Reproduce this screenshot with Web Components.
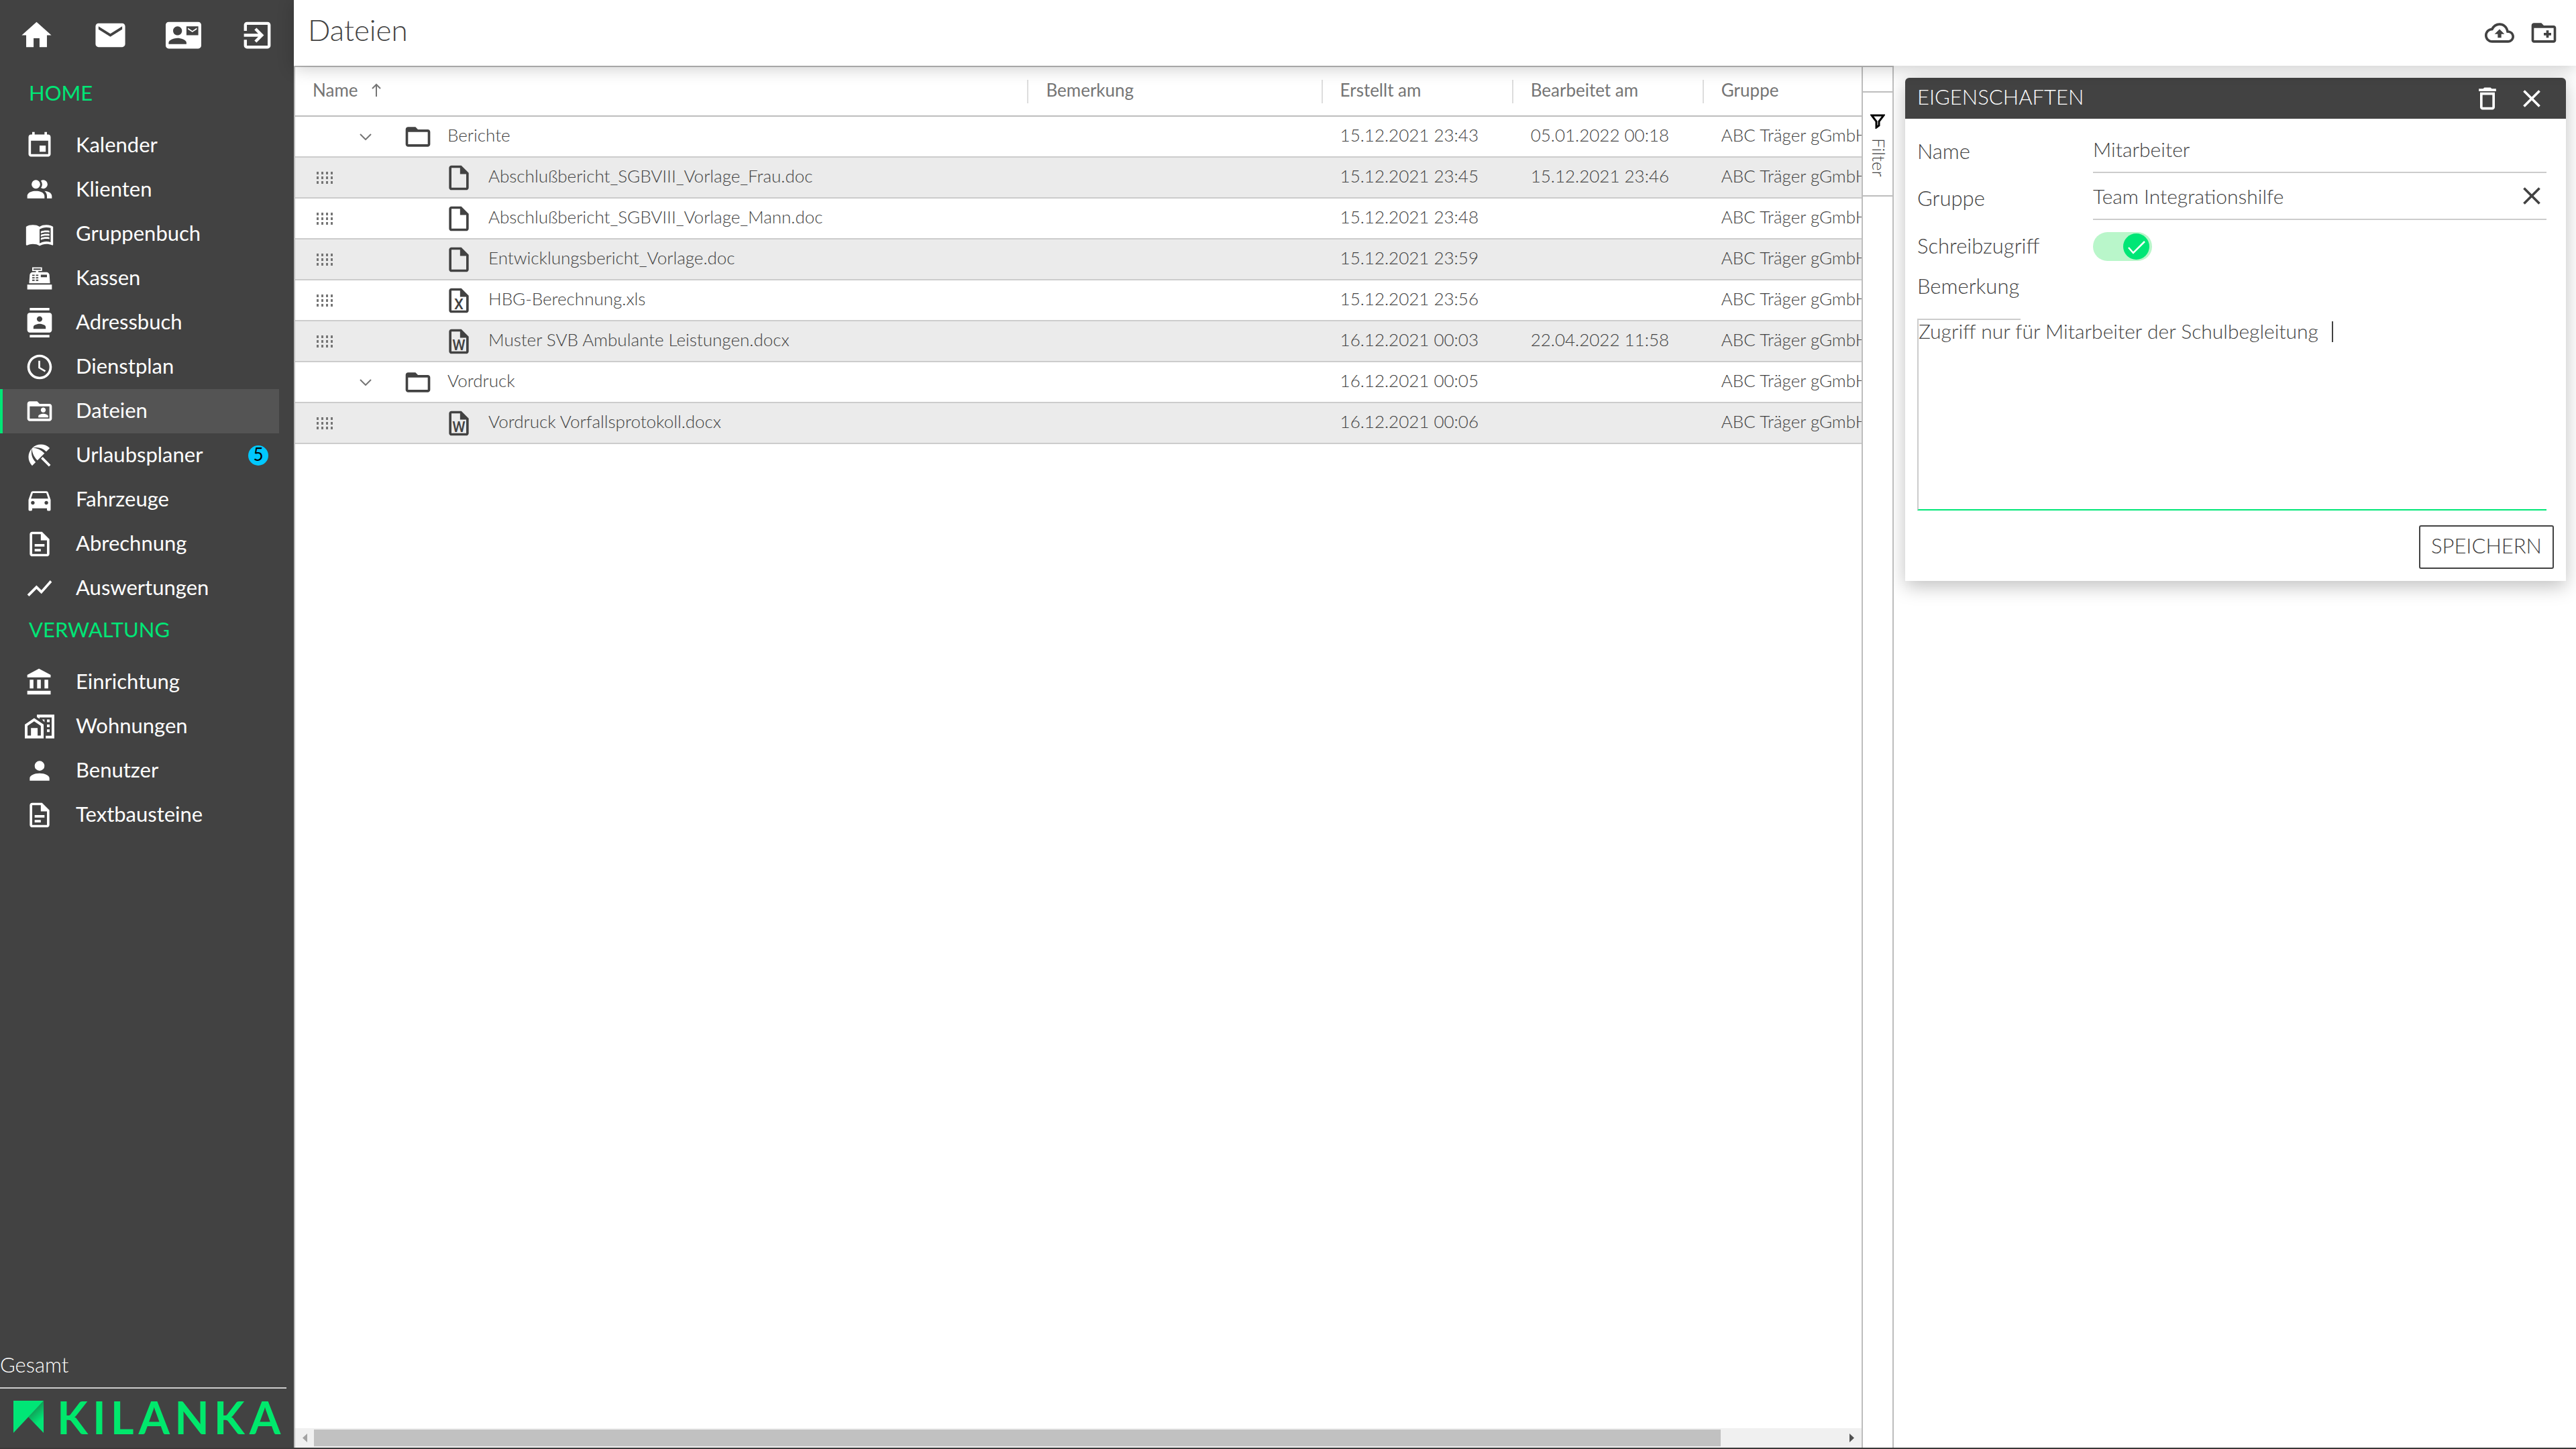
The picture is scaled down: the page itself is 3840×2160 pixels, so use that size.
<!DOCTYPE html>
<html lang="de">
<head>
<meta charset="utf-8">
<title>Dateien</title>
<style>
  body {
    margin: 0;
    background: #fff;
    color: #424242;
    font-family: Lato, "Liberation Sans", sans-serif;
    font-size: 31px;
    font-weight: 300;
    line-height: 36px;
  }
</style>
</head>
<body>
<kila-app></kila-app>

<script>
const ICONS = {
  home: 'M10 20v-6h4v6h5v-8h3L12 3 2 12h3v8z',
  mail: 'M20 4H4c-1.1 0-1.99.9-1.99 2L2 18c0 1.1.9 2 2 2h16c1.1 0 2-.9 2-2V6c0-1.1-.9-2-2-2zm0 4l-8 5-8-5V6l8 5 8-5v2z',
  contactMail: 'M21 8V7l-3 2-3-2v1l3 2 3-2m1-5H2C.9 3 0 3.9 0 5v14c0 1.1.9 2 2 2h20c1.1 0 1.99-.9 1.99-2L24 5c0-1.1-.9-2-2-2zM8 6c1.66 0 3 1.34 3 3s-1.34 3-3 3-3-1.34-3-3 1.34-3 3-3zm6 12H2v-1c0-2 4-3.1 6-3.1s6 1.1 6 3.1v1zm8-6h-8V6h8v6z',
  exit: 'M10.09 15.59L11.5 17l5-5-5-5-1.41 1.41L12.67 11H3v2h9.67l-2.58 2.59zM19 3H5a2 2 0 0 0-2 2v4h2V5h14v14H5v-4H3v4a2 2 0 0 0 2 2h14c1.1 0 2-.9 2-2V5c0-1.1-.9-2-2-2z',
  event: 'M17 12h-5v5h5v-5zM16 1v2H8V1H6v2H5c-1.11 0-1.99.9-1.99 2L3 19c0 1.1.89 2 2 2h14c1.1 0 2-.9 2-2V5c0-1.1-.9-2-2-2h-1V1h-2zm3 18H5V8h14v11z',
  people: 'M16 17v2H2v-2s0-4 7-4 7 4 7 4m-3.5-9.5A3.5 3.5 0 1 0 9 11a3.5 3.5 0 0 0 3.5-3.5m3.44 5.5A5.32 5.32 0 0 1 18 17v2h4v-2s0-3.63-6.06-4M15 4a3.39 3.39 0 0 0-1.93.59 5 5 0 0 1 0 5.82A3.39 3.39 0 0 0 15 11a3.5 3.5 0 0 0 0-7z',
  book: 'M21 5c-1.11-.35-2.33-.5-3.5-.5-1.95 0-4.05.4-5.5 1.5-1.45-1.1-3.55-1.5-5.5-1.5S2.45 4.9 1 6v14.65c0 .25.25.5.5.5.1 0 .15-.05.25-.05C3.1 20.45 5.05 20 6.5 20c1.95 0 4.05.4 5.5 1.5 1.35-.85 3.8-1.5 5.5-1.5 1.65 0 3.35.3 4.75 1.05.1.05.15.05.25.05.25 0 .5-.25.5-.5V6c-.6-.45-1.25-.75-2-1zm0 13.5c-1.1-.35-2.3-.5-3.5-.5-1.7 0-4.15.65-5.5 1.5V8c1.35-.85 3.8-1.5 5.5-1.5 1.2 0 2.4.15 3.5.5v11.5zM17.5 10.5c.88 0 1.73.09 2.5.26V9.24C19.21 9.09 18.36 9 17.5 9c-1.7 0-3.24.29-4.5.83v1.66c1.13-.64 2.7-.99 4.5-.99zM13 12.49v1.66c1.13-.64 2.7-.99 4.5-.99.88 0 1.73.09 2.5.26V11.9c-.79-.15-1.64-.24-2.5-.24-1.7 0-3.24.3-4.5.83zM17.5 14.33c-1.7 0-3.24.29-4.5.83v1.66c1.13-.64 2.7-.99 4.5-.99.88 0 1.73.09 2.5.26v-1.52c-.79-.16-1.64-.24-2.5-.24z',
  register: 'M2 17h20v4H2v-4M6.25 7H9V6H6V3h8v3h-3v1h6.8c1 0 2 1 2.2 2l.5 7h-17l.5-7c.2-1 1.2-2 2.25-2M13 9v2h5V9h-5M6 9v1h2V9H6m3 0v1h2V9H9m-3 2v1h2v-1H6m3 0v1h2v-1H9m-3 2v1h2v-1H6m3 0v1h2v-1H9M7 4v1h6V4H7z',
  contacts: 'M20 0H4v2h16V0zM4 24h16v-2H4v2zM20 4H4c-1.1 0-2 .9-2 2v12c0 1.1.9 2 2 2h16c1.1 0 2-.9 2-2V6c0-1.1-.9-2-2-2zm-8 2.75c1.24 0 2.25 1.01 2.25 2.25s-1.01 2.25-2.25 2.25S9.75 10.24 9.75 9 10.76 6.75 12 6.75zM17 17H7v-1.5c0-1.67 3.33-2.5 5-2.5s5 .83 5 2.5V17z',
  clock: 'M11.99 2C6.47 2 2 6.48 2 12s4.47 10 9.99 10C17.52 22 22 17.52 22 12S17.52 2 11.99 2zM12 20c-4.42 0-8-3.58-8-8s3.58-8 8-8 8 3.58 8 8-3.58 8-8 8zm.5-13H11v6l5.25 3.15.75-1.23-4.5-2.67z',
  folderShared: 'M20 6h-8l-2-2H4c-1.1 0-1.99.9-1.99 2L2 18c0 1.1.9 2 2 2h16c1.1 0 2-.9 2-2V8c0-1.1-.9-2-2-2zm0 12H4V8h16v10zM15 13c1.1 0 2-.9 2-2s-.9-2-2-2-2 .9-2 2 .9 2 2 2zm-4 4h8v-1c0-1.33-2.67-2-4-2s-4 .67-4 2v1z',
  beach: 'M13.127 14.56l1.43-1.43 6.44 6.443L19.57 21zm4.293-5.73l2.86-2.86c-3.95-3.95-10.35-3.96-14.3-.02 3.93-1.3 8.31-.25 11.44 2.88zM5.95 5.98c-3.94 3.95-3.93 10.35.02 14.3l2.86-2.86C5.7 14.29 4.65 9.91 5.95 5.98zm.02-.02l-.01.01c-.38 3.01 1.17 6.88 4.3 10.02l5.73-5.73c-3.13-3.13-7.01-4.69-10.02-4.3z',
  car: 'M18.92 6.01C18.72 5.42 18.16 5 17.5 5h-11c-.66 0-1.21.42-1.42 1.01L3 12v8c0 .55.45 1 1 1h1c.55 0 1-.45 1-1v-1h12v1c0 .55.45 1 1 1h1c.55 0 1-.45 1-1v-8l-2.08-5.99zM6.5 16c-.83 0-1.5-.67-1.5-1.5S5.67 13 6.5 13s1.5.67 1.5 1.5S7.33 16 6.5 16zm11 0c-.83 0-1.5-.67-1.5-1.5s.67-1.5 1.5-1.5 1.5.67 1.5 1.5-.67 1.5-1.5 1.5zM5 11l1.5-4.5h11L19 11H5z',
  document: 'M6 2c-1.1 0-2 .9-2 2v16c0 1.1.9 2 2 2h12c1.1 0 2-.9 2-2V8l-6-6H6zm0 2h7v5h5v11H6V4zM8 12h8v2H8zM8 16h5v2H8z',
  chart: 'M3.5 18.49l6-6.01 4 4L22 6.92l-1.41-1.41-7.09 7.97-4-4L2 16.99z',
  bank: 'M4 10v7h3v-7H4zm6 0v7h3v-7h-3zM2 22h19v-3H2v3zm14-12v7h3v-7h-3zm-4.5-9L2 6v2h19V6l-9.5-5z',
  homeWork: 'M0 10.3l7.6-5.1 7.7 5.1v11.4H0zM2.2 11.5v7.9H5v-6.2h5.4v6.2H13v-7.9L7.6 7.8zM9.8 2.3H24v19.4h-7v-2.2h4.8V4.6H12v1.1L9.8 4.3zM18 6.3h2.2v2.2H18zM18 10.3h2.2v2.2H18zM18 14.3h2.2v2.2H18zM14 6.3h2v2.2z',
  person: 'M12 4a4 4 0 1 1 0 8 4 4 0 0 1 0-8m0 10c4.42 0 8 1.79 8 4v2H4v-2c0-2.21 3.58-4 8-4z',
  cloudUpload: 'M19.35 10.04C18.67 6.59 15.64 4 12 4 9.11 4 6.6 5.64 5.35 8.04 2.34 8.36 0 10.91 0 14c0 3.31 2.69 6 6 6h13c2.76 0 5-2.24 5-5 0-2.64-2.05-4.78-4.65-4.96zM19 18H6c-2.21 0-4-1.79-4-4 0-2.05 1.53-3.76 3.56-3.97l1.07-.11.5-.95C8.08 7.14 9.94 6 12 6c2.62 0 4.88 1.86 5.39 4.43l.3 1.5 1.53.11c1.56.1 2.78 1.41 2.78 2.96 0 1.65-1.35 3-3 3zM8 13h2.55v3h2.9v-3H16l-4-4z',
  folderAdd: 'M20 6h-8l-2-2H4c-1.11 0-1.99.89-1.99 2L2 18c0 1.11.89 2 2 2h16c1.11 0 2-.89 2-2V8c0-1.11-.89-2-2-2zm0 12H4V8h16v10zm-8-4h2v2h2v-2h2v-2h-2v-2h-2v2h-2v2z',
  folder: 'M20 6h-8l-2-2H4c-1.1 0-1.99.9-1.99 2L2 18c0 1.1.9 2 2 2h16c1.1 0 2-.9 2-2V8c0-1.1-.9-2-2-2zm0 12H4V8h16v10z',
  file: 'M6 2c-1.1 0-2 .9-2 2v16c0 1.1.9 2 2 2h12c1.1 0 2-.9 2-2V8l-6-6H6zm0 2h7v5h5v11H6V4z',
  trash: 'M6 19c0 1.1.9 2 2 2h8c1.1 0 2-.9 2-2V7H6v12zM8 9h8v10H8V9zm7.5-5l-1-1h-5l-1 1H5v2h14V4h-3.5z',
  close: 'M19 6.41L17.59 5 12 10.59 6.41 5 5 6.41 10.59 12 5 17.59 6.41 19 12 13.41 17.59 19 19 17.59 13.41 12z'
};

// <kila-icon name="home"> : 24er Raster, letter = Buchstabe im Dateisymbol
class KilaIcon extends HTMLElement {
  constructor() {
    super();
    this.attachShadow({ mode: 'open' });
  }

  connectedCallback() {
    const letter = this.getAttribute('letter');
    this.shadowRoot.innerHTML = `
      <style>
        :host {
          display: block;
          flex: none;
          width: var(--icon-size, 44px);
          height: var(--icon-size, 44px);
        }
        svg { display: block; width: 100%; height: 100%; fill: currentColor; overflow: visible; }
        text { font: 500 12px Roboto, sans-serif; text-anchor: middle; }
      </style>
      <svg viewBox="0 0 24 24" aria-hidden="true">
        <path fill-rule="evenodd" d="${ICONS[this.getAttribute('name')]}"/>
        ${letter ? `<text x="12" y="19">${letter}</text>` : ''}
      </svg>
    `;
  }
}
customElements.define('kila-icon', KilaIcon);

class NavItem extends HTMLElement {
  constructor() {
    super();
    this.attachShadow({ mode: 'open' });
  }

  connectedCallback() {
    const badge = this.getAttribute('badge');
    this.shadowRoot.innerHTML = `
      <style>
        :host { display: block; margin-right: 22px; }
        a {
          display: flex;
          align-items: center;
          height: 66px;
          box-sizing: border-box;
          padding: 0 16px 0 33px;
          border-left: 4px solid transparent;
          color: #fff;
          font-weight: 400;
          text-decoration: none;
        }
        :host([active]) a { background: #545454; border-left-color: #00e676; }
        .label { flex: 1; padding: 0 0 4px 32px; }
        .badge {
          width: 30px;
          height: 30px;
          border-radius: 50%;
          background: #00c8ff;
          color: #000;
          font-size: 26px;
          line-height: 26px;
          text-align: center;
        }
      </style>
      <a href="#">
        <kila-icon name="${this.getAttribute('icon')}"></kila-icon>
        <span class="label"><slot></slot></span>
        ${badge ? `<span class="badge">${badge}</span>` : ''}
      </a>
    `;
  }
}
customElements.define('nav-item', NavItem);

class NavSection extends HTMLElement {
  constructor() {
    super();
    this.attachShadow({ mode: 'open' });
  }

  connectedCallback() {
    this.shadowRoot.innerHTML = `
      <style>
        :host { display: block; }
        h2 {
          margin: 0;
          padding: 10px 0 28px 43px;
          color: #00e676;
          font-size: 31px;
          font-weight: 400;
          line-height: 36px;
        }
      </style>
      <h2>${this.getAttribute('heading')}</h2>
      <slot></slot>
    `;
  }
}
customElements.define('nav-section', NavSection);

class KilaLogo extends HTMLElement {
  constructor() {
    super();
    this.attachShadow({ mode: 'open' });
    this.shadowRoot.innerHTML = `
      <style>
        :host {
          display: flex;
          align-items: center;
          gap: 20px;
          height: 48px;
          padding: 18px 0 22px 20px;
          color: #00e86c;
          font-size: 67px;
          font-weight: 700;
          line-height: 48px;
        }
        svg { flex: none; width: 45px; height: 48px; }
        span { letter-spacing: 7px; }
      </style>
      <svg viewBox="0 0 45 48" aria-hidden="true">
        <defs>
          <linearGradient id="fold" gradientUnits="userSpaceOnUse" x1="30" y1="15" x2="42" y2="28">
            <stop offset="0" stop-color="#12a058"/>
            <stop offset="1" stop-color="#00e676"/>
          </linearGradient>
        </defs>
        <path d="M45 0v48L22 24z" fill="url(#fold)"/>
        <path d="M0 0h45L0 48z" fill="#00e676"/>
      </svg>
      <span>KILANKA</span>
    `;
  }
}
customElements.define('kila-logo', KilaLogo);

class KilaSidebar extends HTMLElement {
  constructor() {
    super();
    this.attachShadow({ mode: 'open' });
    this.shadowRoot.innerHTML = `
      <style>
        :host {
          display: flex;
          flex-direction: column;
          flex: none;
          width: 438px;
          background: #424242;
          color: #fff;
        }
        .shortcuts {
          display: grid;
          grid-template-columns: repeat(4, 1fr);
          height: 105px;
          margin-bottom: 5px;
          --icon-size: 53px;
        }
        button {
          display: grid;
          place-items: center;
          padding: 0;
          border: 0;
          background: none;
          color: inherit;
        }
        nav { flex: 1; }
        select {
          appearance: none;
          display: block;
          width: 427px;
          height: 60px;
          padding: 0 0 10px;
          border: 0;
          border-bottom: 2px solid #ccc;
          border-radius: 0;
          background: none;
          color: inherit;
          font: inherit;
        }
      </style>
      <div class="shortcuts">
        <button aria-label="Startseite"><kila-icon name="home"></kila-icon></button>
        <button aria-label="Nachrichten"><kila-icon name="mail"></kila-icon></button>
        <button aria-label="Kontakt"><kila-icon name="contactMail"></kila-icon></button>
        <button aria-label="Abmelden"><kila-icon name="exit"></kila-icon></button>
      </div>
      <nav>
        <nav-section heading="HOME">
          <nav-item icon="event">Kalender</nav-item>
          <nav-item icon="people">Klienten</nav-item>
          <nav-item icon="book">Gruppenbuch</nav-item>
          <nav-item icon="register">Kassen</nav-item>
          <nav-item icon="contacts">Adressbuch</nav-item>
          <nav-item icon="clock">Dienstplan</nav-item>
          <nav-item icon="folderShared" active>Dateien</nav-item>
          <nav-item icon="beach" badge="5">Urlaubsplaner</nav-item>
          <nav-item icon="car">Fahrzeuge</nav-item>
          <nav-item icon="document">Abrechnung</nav-item>
          <nav-item icon="chart">Auswertungen</nav-item>
        </nav-section>
        <nav-section heading="VERWALTUNG">
          <nav-item icon="bank">Einrichtung</nav-item>
          <nav-item icon="homeWork">Wohnungen</nav-item>
          <nav-item icon="person">Benutzer</nav-item>
          <nav-item icon="document">Textbausteine</nav-item>
        </nav-section>
      </nav>
      <select aria-label="Bereich"><option>Gesamt</option></select>
      <kila-logo></kila-logo>
    `;
  }
}
customElements.define('kila-sidebar', KilaSidebar);

class PageHeader extends HTMLElement {
  constructor() {
    super();
    this.attachShadow({ mode: 'open' });
    this.shadowRoot.innerHTML = `
      <style>
        :host {
          display: flex;
          align-items: center;
          position: relative;
          z-index: 1;
          height: 98px;
          box-sizing: border-box;
          padding: 0 26px 0 21px;
          background: #fff;
          box-shadow: 0 4px 24px rgba(0, 0, 0, 0.2);
        }
        h1 {
          flex: 1;
          margin: 0;
          padding-bottom: 10px;
          font-size: 44px;
          font-weight: 300;
          line-height: 50px;
        }
        .actions { display: flex; gap: 22px; }
        button {
          padding: 0;
          border: 0;
          background: none;
          color: inherit;
        }
      </style>
      <h1><slot></slot></h1>
      <div class="actions">
        <button aria-label="Hochladen"><kila-icon name="cloudUpload"></kila-icon></button>
        <button aria-label="Neuer Ordner"><kila-icon name="folderAdd"></kila-icon></button>
      </div>
    `;
  }
}
customElements.define('page-header', PageHeader);

const FILES = [
  { folder: true, name: 'Berichte', created: '15.12.2021 23:43', edited: '05.01.2022 00:18' },
  { name: 'Abschlußbericht_SGBVIII_Vorlage_Frau.doc', created: '15.12.2021 23:45', edited: '15.12.2021 23:46' },
  { name: 'Abschlußbericht_SGBVIII_Vorlage_Mann.doc', created: '15.12.2021 23:48', edited: '' },
  { name: 'Entwicklungsbericht_Vorlage.doc', created: '15.12.2021 23:59', edited: '' },
  { name: 'HBG-Berechnung.xls', letter: 'X', created: '15.12.2021 23:56', edited: '' },
  { name: 'Muster SVB Ambulante Leistungen.docx', letter: 'W', created: '16.12.2021 00:03', edited: '22.04.2022 11:58' },
  { folder: true, name: 'Vordruck', created: '16.12.2021 00:05', edited: '' },
  { name: 'Vordruck Vorfallsprotokoll.docx', letter: 'W', created: '16.12.2021 00:06', edited: '' }
];

class FileGrid extends HTMLElement {
  constructor() {
    super();
    this.attachShadow({ mode: 'open' });
  }

  connectedCallback() {
    this.render();
  }

  renderRow(file) {
    const lead = file.folder
      ? '<svg class="chevron" viewBox="0 0 18 10"><path d="M1 1l8 8 8-8"/></svg>'
      : '<span class="grip"></span>';
    return `
      <tr>
        <td>
          <div class="name">
            <span class="lead ${file.folder ? 'folder' : ''}">${lead}</span>
            <kila-icon name="${file.folder ? 'folder' : 'file'}" ${file.letter ? `letter="${file.letter}"` : ''}></kila-icon>
            <span class="text">${file.name}</span>
          </div>
        </td>
        <td></td>
        <td>${file.created}</td>
        <td>${file.edited}</td>
        <td>ABC Träger gGmbH</td>
      </tr>
    `;
  }

  render() {
    this.shadowRoot.innerHTML = `
      <style>
        :host {
          display: flex;
          flex: 1;
          min-width: 0;
          border: 2px solid #bdbdbd;
          border-bottom: 0;
        }
        .grid {
          display: flex;
          flex-direction: column;
          flex: 1;
          min-width: 0;
        }
        .viewport { flex: 1; overflow: hidden; }
        table {
          width: 2536px;
          table-layout: fixed;
          border-collapse: separate;
          border-spacing: 0;
          font-size: 26px;
          line-height: 32px;
        }
        .c-name { width: 1091px; }
        .c-text { width: 438px; }
        .c-date { width: 284px; }
        th {
          height: 72px;
          padding: 0;
          border-bottom: 2px solid #bdbdbd;
          color: #757575;
          font-weight: 400;
          text-align: left;
        }
        th div {
          display: flex;
          align-items: center;
          height: 35px;
          box-sizing: border-box;
          padding: 0 0 4px 26px;
          border-left: 2px solid #ddd;
        }
        th:first-child div { border-left: 0; }
        .sort { width: 14px; height: 20px; margin-left: 20px; }
        svg { fill: none; stroke: #757575; stroke-width: 2; }
        td {
          height: 54px;
          padding: 0 0 5px 28px;
          border-bottom: 2px solid #ccc;
          white-space: nowrap;
          overflow: hidden;
        }
        td:first-child { height: 59px; padding: 0; }
        tr:nth-child(even) td { background: #ebebeb; }
        .name { display: flex; align-items: center; height: 59px; }
        .lead {
          display: flex;
          width: 190px;
          box-sizing: border-box;
          margin-left: 32px;
        }
        .lead.folder { width: 129px; padding-left: 64px; }
        .chevron { width: 18px; height: 10px; }
        .grip {
          width: 24px;
          height: 18px;
          background: repeating-linear-gradient(90deg, #757575 0 3px, transparent 3px 7px);
          -webkit-mask: repeating-linear-gradient(#000 0 4px, transparent 4px 7px);
          mask: repeating-linear-gradient(#000 0 4px, transparent 4px 7px);
        }
        .text { padding: 0 0 5px 22px; }
        .scroll {
          display: flex;
          align-items: center;
          height: 29px;
          background: #f0f0f0;
        }
        .scroll svg { flex: none; width: 28px; height: 29px; fill: #a3a3a3; stroke: none; }
        .scroll svg:last-child { fill: #505050; }
        .track { flex: 1; height: 25px; }
        .thumb { width: 92%; height: 25px; background: #c1c1c1; }
        .rail {
          flex: none;
          width: 44px;
          border-left: 2px solid #bdbdbd;
          padding-top: 36px;
        }
        .rail button {
          display: flex;
          flex-direction: column;
          align-items: center;
          gap: 14px;
          width: 44px;
          height: 157px;
          box-sizing: border-box;
          padding: 32px 0 0;
          border: 0;
          border-top: 2px solid #bdbdbd;
          border-bottom: 2px solid #bdbdbd;
          background: none;
          color: #424242;
          font: inherit;
          font-size: 26px;
          line-height: 32px;
        }
        .rail svg { width: 22px; height: 22px; stroke: #000; stroke-width: 3; }
        .rail span { padding-left: 4px; writing-mode: vertical-rl; }
      </style>
      <div class="grid">
        <div class="viewport">
          <table>
            <colgroup>
              <col class="c-name"><col class="c-text"><col class="c-date"><col class="c-date"><col class="c-text">
            </colgroup>
            <thead>
              <tr>
                <th><div>Name<svg class="sort" viewBox="0 0 14 20"><path d="M7 20V2M1 8l6-6 6 6"/></svg></div></th>
                <th><div>Bemerkung</div></th>
                <th><div>Erstellt am</div></th>
                <th><div>Bearbeitet am</div></th>
                <th><div>Gruppe</div></th>
              </tr>
            </thead>
            <tbody>${FILES.map(file => this.renderRow(file)).join('')}</tbody>
          </table>
        </div>
        <div class="scroll" aria-hidden="true">
          <svg viewBox="0 0 28 29"><path d="M18 8v13l-7-6.500z"/></svg>
          <div class="track"><div class="thumb"></div></div>
          <svg viewBox="0 0 28 29"><path d="M10 8v13l7-6.500z"/></svg>
        </div>
      </div>
      <div class="rail">
        <button>
          <svg viewBox="0 0 22 22"><path d="M2 2h18l-7 9v6l-4 3v-9z"/></svg>
          <span>Filter</span>
        </button>
      </div>
    `;
  }
}
customElements.define('file-grid', FileGrid);

class PropertiesPanel extends HTMLElement {
  constructor() {
    super();
    this.attachShadow({ mode: 'open' });
    this.shadowRoot.innerHTML = `
      <style>
        :host {
          display: block;
          flex: none;
          width: 1017px;
          box-sizing: border-box;
          padding: 18px 15px 0 17px;
          overflow: hidden;
        }
        .card {
          border-radius: 6px 6px 0 0;
          background: #fff;
          box-shadow: 0 8px 28px rgba(0, 0, 0, 0.25);
        }
        header {
          display: flex;
          align-items: center;
          gap: 22px;
          height: 61px;
          padding: 0 29px 0 18px;
          border-radius: 6px 6px 0 0;
          background: #424242;
          color: #fff;
        }
        h2 {
          flex: 1;
          margin: 0;
          padding-bottom: 6px;
          font-size: 31px;
          font-weight: 300;
          line-height: 36px;
        }
        button {
          padding: 0;
          border: 0;
          background: none;
          color: inherit;
          font: inherit;
        }
        form { padding: 11px 18px 18px; }
        .row {
          display: grid;
          grid-template-columns: 262px 1fr;
          align-items: center;
          height: 70px;
          margin-right: 11px;
        }
        label { padding-top: 4px; }
        .switch-row { height: 76px; }
        .switch-row label { padding-top: 0; }
        .field {
          display: flex;
          align-items: center;
          height: 68px;
          border-bottom: 2px solid #ccc;
        }
        input[type="text"] {
          flex: 1;
          min-width: 0;
          height: 36px;
          padding: 0;
          border: 0;
          outline: 0;
          background: none;
          color: inherit;
          font: inherit;
          font-size: 30px;
        }
        input[type="checkbox"] {
          appearance: none;
          width: 88px;
          height: 43px;
          margin: 2px 0 0;
          border-radius: 22px;
          background:
            no-repeat 45px 2px / 39px 39px url('data:image/svg+xml,<svg xmlns="http://www.w3.org/2000/svg" viewBox="0 0 39 39"><circle cx="19.500" cy="19.500" r="19.500" fill="%2300e676"/><path d="M8 21l7 8 17-17" fill="none" stroke="white" stroke-width="2.500"/></svg>'),
            #b9f6ca;
        }
        .note-label { display: block; height: 67px; }
        .note { position: relative; margin-right: 11px; }
        .note::before {
          content: '';
          position: absolute;
          top: 0;
          left: 0;
          width: 154px;
          height: 2px;
          background: #ccc;
        }
        textarea {
          display: block;
          width: 100%;
          height: 286px;
          box-sizing: border-box;
          padding: 0;
          border: 0;
          border-left: 2px solid #ccc;
          border-bottom: 2px solid #00e676;
          outline: 0;
          resize: none;
          background: none;
          color: inherit;
          font: inherit;
          font-size: 30px;
        }
        .caret {
          position: absolute;
          top: 4px;
          left: 618px;
          width: 2px;
          height: 31px;
          background: #424242;
        }
        .buttons { display: flex; justify-content: flex-end; margin-top: 22px; }
        .save {
          height: 65px;
          padding: 0 16px 6px;
          border: 2px solid #424242;
          border-radius: 3px;
        }
      </style>
      <div class="card">
        <header>
          <h2>EIGENSCHAFTEN</h2>
          <button aria-label="Löschen"><kila-icon name="trash"></kila-icon></button>
          <button aria-label="Schließen"><kila-icon name="close"></kila-icon></button>
        </header>
        <form>
          <div class="row">
            <label for="name">Name</label>
            <div class="field"><input type="text" id="name" value="Mitarbeiter"></div>
          </div>
          <div class="row">
            <label for="group">Gruppe</label>
            <div class="field">
              <input type="text" id="group" value="Team Integrationshilfe">
              <button type="button" aria-label="Gruppe leeren"><kila-icon name="close"></kila-icon></button>
            </div>
          </div>
          <div class="row switch-row">
            <label for="write">Schreibzugriff</label>
            <input type="checkbox" id="write" checked>
          </div>
          <label class="note-label" for="note">Bemerkung</label>
          <div class="note">
            <textarea id="note">Zugriff nur für Mitarbeiter der Schulbegleitung </textarea>
            <span class="caret"></span>
          </div>
          <div class="buttons"><button type="button" class="save">SPEICHERN</button></div>
        </form>
      </div>
    `;
  }
}
customElements.define('properties-panel', PropertiesPanel);

class KilaApp extends HTMLElement {
  constructor() {
    super();
    this.attachShadow({ mode: 'open' });
    this.shadowRoot.innerHTML = `
      <style>
        :host {
          display: flex;
          height: 100vh;
          box-sizing: border-box;
          border-bottom: 2px solid #3a3838;
        }
        main { display: flex; flex-direction: column; flex: 1; min-width: 0; }
        .content { display: flex; flex: 1; min-height: 0; }
      </style>
      <kila-sidebar></kila-sidebar>
      <main>
        <page-header>Dateien</page-header>
        <div class="content">
          <file-grid></file-grid>
          <properties-panel></properties-panel>
        </div>
      </main>
    `;
  }
}
customElements.define('kila-app', KilaApp);
</script>
</body>
</html>
